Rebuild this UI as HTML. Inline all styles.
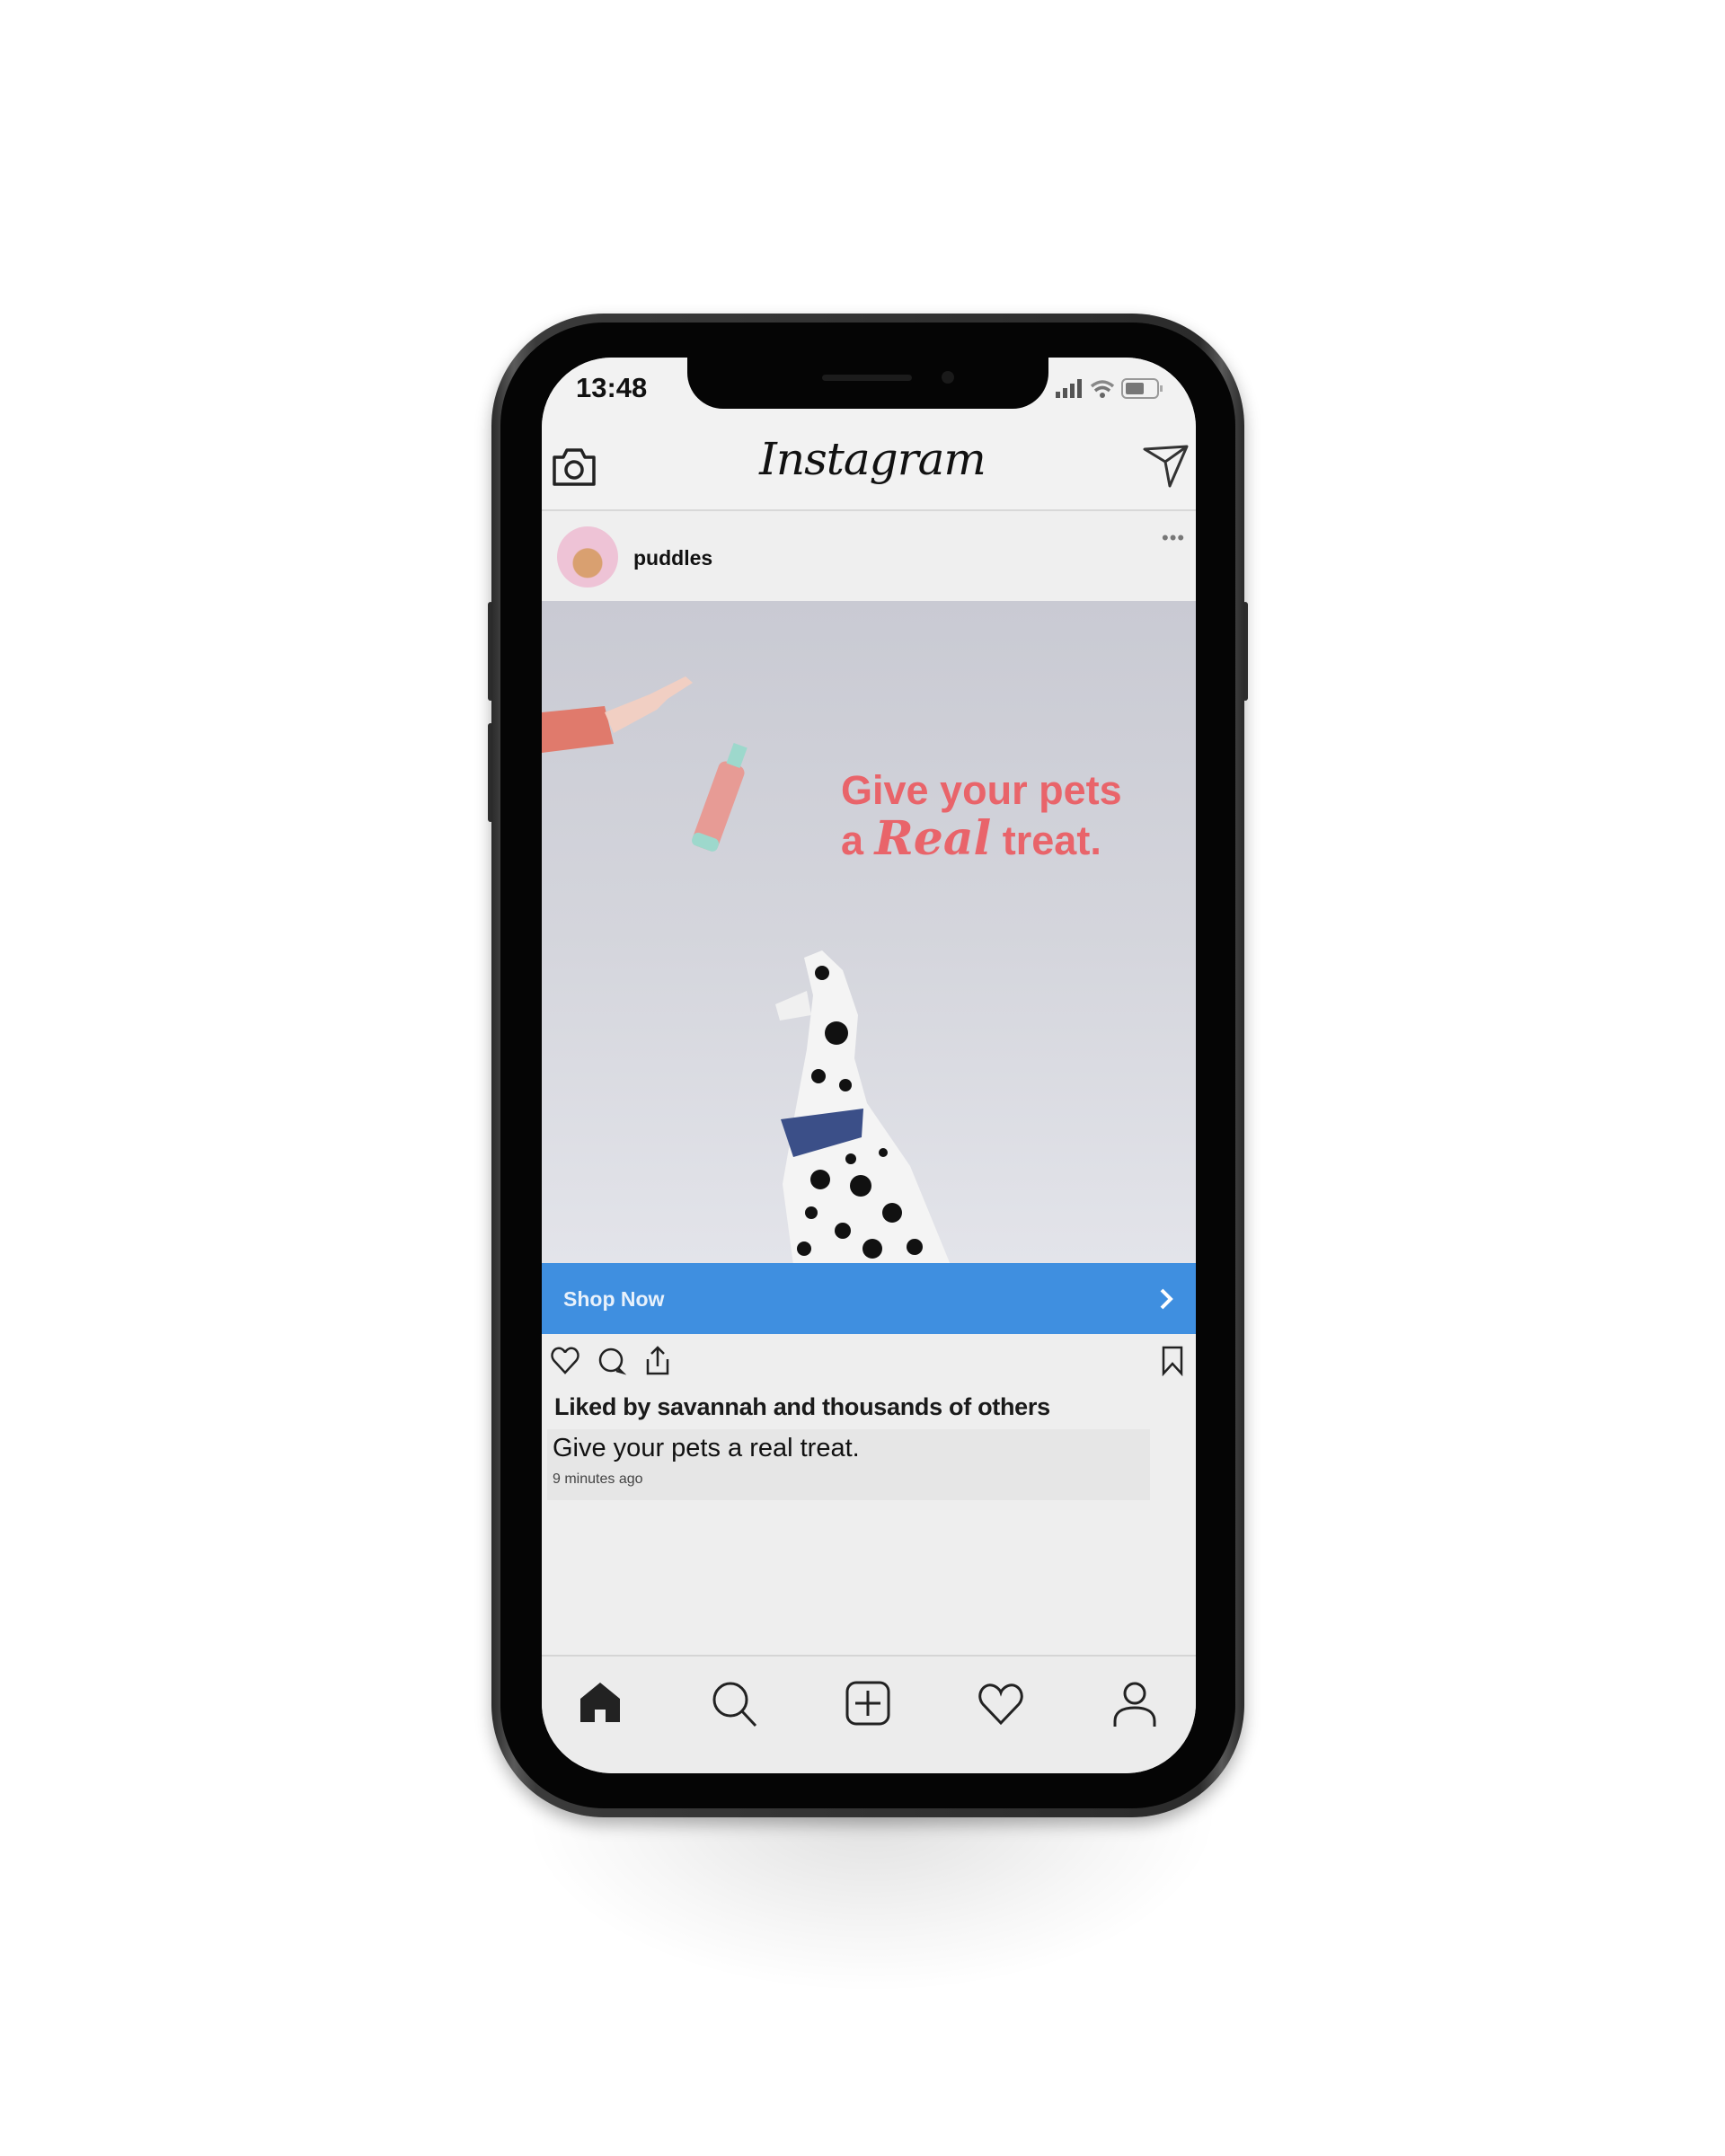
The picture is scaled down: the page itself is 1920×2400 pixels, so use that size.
<!DOCTYPE html>
<html><head><meta charset="utf-8"><style>
*{margin:0;padding:0;box-sizing:border-box}
body{width:1920px;height:2400px;background:#fff;position:relative;overflow:hidden;font-family:"Liberation Sans",sans-serif}
.abs{position:absolute}
.shadow{left:580px;top:1980px;width:780px;height:240px;background:radial-gradient(ellipse at 50% 15%,rgba(0,0,0,.12),rgba(0,0,0,.03) 50%,rgba(0,0,0,0) 70%)}
.phone{left:547px;top:349px;width:838px;height:1674px;border-radius:125px;background:linear-gradient(90deg,#2a2a2a,#5a5a5a 3%,#3a3a3a 6%,#2b2b2b 94%,#585858 97%,#2a2a2a);box-shadow:0 8px 18px rgba(0,0,0,.3)}
.bezel{left:557px;top:359px;width:818px;height:1654px;border-radius:115px;background:#050505}
.screen{left:603px;top:398px;width:728px;height:1576px;border-radius:78px;background:#eeeeee;overflow:hidden}
.btn{background:#333;border-radius:3px}
</style></head><body>
<div class="abs shadow"></div>
<div class="abs btn" style="left:543px;top:670px;width:6px;height:110px"></div>
<div class="abs btn" style="left:543px;top:805px;width:6px;height:110px"></div>
<div class="abs btn" style="left:1383px;top:670px;width:6px;height:110px"></div>
<div class="abs phone"></div>
<div class="abs bezel"></div>
<div class="abs screen">
  <div class="abs" style="left:0;top:0;width:728px;height:170px;background:#f2f2f2"></div>
  <div class="abs" style="left:0;top:169px;width:728px;height:2px;background:#d8d8d8"></div>
  <div class="abs" style="left:0;top:171px;width:728px;height:100px;background:#efefef"></div>
  <div class="abs" style="left:38px;top:16px;font-size:31px;font-weight:bold;color:#111">13:48</div>
  <svg class="abs" style="left:568px;top:20px" width="150" height="30" viewBox="0 0 150 30">
    <rect x="4" y="18" width="5" height="7" fill="#555"/><rect x="12" y="14" width="5" height="11" fill="#555"/><rect x="20" y="9" width="5" height="16" fill="#555"/><rect x="28" y="4" width="5" height="21" fill="#555"/>
    <path d="M44 12 Q56 2 68 12" stroke="#888" stroke-width="3.5" fill="none"/><path d="M48 17 Q56 10 64 17" stroke="#777" stroke-width="3.5" fill="none"/><circle cx="56" cy="22" r="3" fill="#666"/>
    <rect x="78" y="4" width="40" height="21" rx="5" stroke="#999" stroke-width="2" fill="none"/><rect x="82" y="8" width="20" height="13" rx="2" fill="#777"/><rect x="120" y="11" width="3" height="7" fill="#aaa"/>
  </svg>
  <svg class="abs" style="left:10px;top:97px" width="52" height="48" viewBox="0 0 52 48"><path d="M4 14 h10 l4 -8 h16 l4 8 h10 v30 h-44z" stroke="#222" stroke-width="3.5" fill="none" stroke-linejoin="round"/><circle cx="26" cy="28" r="9" stroke="#222" stroke-width="3.5" fill="none"/></svg>
  <div class="abs" style="left:0;top:84px;width:736px;text-align:center;font-family:'DejaVu Serif',serif;font-style:italic;font-size:50px;color:#111;letter-spacing:-1px">Instagram</div>
  <svg class="abs" style="left:668px;top:96px" width="54" height="50" viewBox="0 0 54 50"><path d="M3 6 L50 3 L31 47 L26 20 Z M26 20 L50 3" stroke="#333" stroke-width="3" fill="none" stroke-linejoin="round"/></svg>
  <div class="abs" style="left:17px;top:188px;width:68px;height:68px;border-radius:50%;background:radial-gradient(circle at 50% 60%,#d9a070 0 30%,#eec3d6 32%)"></div>
  <div class="abs" style="left:102px;top:210px;font-size:23px;font-weight:bold;color:#111">puddles</div>
  <div class="abs" style="left:690px;top:188px;font-size:22px;color:#777;letter-spacing:1px">•••</div>
  <div class="abs" style="left:0;top:271px;width:728px;height:737px;background:linear-gradient(180deg,#c9cad3 0%,#d4d5dc 50%,#e3e4ea 100%)"></div>
  <svg class="abs" style="left:0;top:340px" width="180" height="120" viewBox="0 0 180 120"><path d="M0 55 L70 48 L80 90 L0 100Z" fill="#e07a6c"/><path d="M70 55 L120 35 L160 15 L168 22 L140 40 L128 52 L80 78Z" fill="#f1cfc3"/></svg>
  <svg class="abs" style="left:160px;top:420px" width="80" height="140" viewBox="0 0 80 140"><g transform="rotate(20 40 70)"><rect x="25" y="30" width="30" height="100" rx="8" fill="#e79b95"/><rect x="25" y="115" width="30" height="15" rx="6" fill="#9dd8cc"/><rect x="32" y="8" width="16" height="24" fill="#9dd8cc"/></g></svg>
  <div class="abs" style="left:333px;top:455px;font-size:45px;font-weight:bold;color:#e9646a;line-height:54px">Give your pets<br>a <span style="font-family:'DejaVu Serif',serif;font-style:italic;font-size:52px">Real</span> treat.</div>
  <svg class="abs" style="left:240px;top:660px" width="250" height="350" viewBox="0 0 250 350">
    <path d="M62 50 L52 8 L72 0 L95 22 L112 72 L108 120 L122 170 L170 240 L215 350 L40 350 L28 260 L42 180 L55 110 Z" fill="#f4f4f4"/>
    <path d="M20 60 L55 45 L60 72 L25 78Z" fill="#f0f0f0"/>
    <path d="M26 188 L118 176 L116 208 L40 230Z" fill="#3b4f88"/>
    <g fill="#111"><circle cx="72" cy="25" r="8"/><circle cx="88" cy="92" r="13"/><circle cx="68" cy="140" r="8"/><circle cx="98" cy="150" r="7"/><circle cx="70" cy="255" r="11"/><circle cx="115" cy="262" r="12"/><circle cx="150" cy="292" r="11"/><circle cx="95" cy="312" r="9"/><circle cx="60" cy="292" r="7"/><circle cx="175" cy="330" r="9"/><circle cx="128" cy="332" r="11"/><circle cx="104" cy="232" r="6"/><circle cx="52" cy="332" r="8"/><circle cx="140" cy="225" r="5"/></g>
  </svg>
  <div class="abs" style="left:0;top:1008px;width:728px;height:79px;background:#3f8fe0"></div>
  <div class="abs" style="left:24px;top:1035px;font-size:23px;color:#e8f1fb;font-weight:bold">Shop Now</div>
  <svg class="abs" style="left:685px;top:1034px" width="20" height="28" viewBox="0 0 20 28"><path d="M5 4 L15 14 L5 24" stroke="#fff" stroke-width="4" fill="none"/></svg>
  <svg class="abs" style="left:10px;top:1099px" width="140" height="36" viewBox="0 0 140 36">
    <path d="M16 31 L4 18 C-2 11 4 2 11 4 C14 5 16 8 16 9 C16 8 18 5 21 4 C28 2 34 11 28 18Z" stroke="#222" stroke-width="2.5" fill="none"/>
    <circle cx="67" cy="17" r="12" stroke="#222" stroke-width="2.5" fill="none"/><path d="M75 26 L80 31 L73 29" stroke="#222" stroke-width="2.5" fill="none"/>
    <path d="M108 16 V32 H130 V16 M119 24 V3 M112 10 L119 3 L126 10" stroke="#222" stroke-width="2.5" fill="none"/>
  </svg>
  <svg class="abs" style="left:689px;top:1100px" width="26" height="34" viewBox="0 0 26 34"><path d="M3 2 H23 V31 L13 20 L3 31Z" stroke="#222" stroke-width="2.5" fill="none"/></svg>
  <div class="abs" style="left:14px;top:1153px;font-size:27px;color:#1a1a1a;font-weight:bold;letter-spacing:-0.3px">Liked by savannah and thousands of others</div>
  <div class="abs" style="left:6px;top:1193px;width:671px;height:79px;background:#e6e6e6"></div>
  <div class="abs" style="left:12px;top:1198px;font-size:29px;color:#111">Give your pets a real treat.</div>
  <div class="abs" style="left:12px;top:1240px;font-size:16px;color:#444">9 minutes ago</div>
  <div class="abs" style="left:0;top:1444px;width:728px;height:2px;background:#d5d5d5"></div>
  <div class="abs" style="left:0;top:1446px;width:728px;height:130px;background:#ececec"></div>
  <svg class="abs" style="left:40px;top:1473px" width="50" height="50" viewBox="0 0 50 50"><path d="M3 46 V20 L25 2 L47 20 V46 H31 V32 H19 V46Z" fill="#222"/></svg>
  <svg class="abs" style="left:188px;top:1472px" width="54" height="54" viewBox="0 0 54 54"><circle cx="22" cy="22" r="18" stroke="#222" stroke-width="3" fill="none"/><path d="M35 35 L50 51" stroke="#222" stroke-width="3"/></svg>
  <svg class="abs" style="left:337px;top:1472px" width="52" height="52" viewBox="0 0 52 52"><rect x="3" y="3" width="46" height="46" rx="10" stroke="#222" stroke-width="3" fill="none"/><path d="M26 12 V40 M12 26 H40" stroke="#222" stroke-width="3"/></svg>
  <svg class="abs" style="left:485px;top:1474px" width="52" height="50" viewBox="0 0 52 50"><path d="M26 46 L6 25 C-2 15 6 2 16 4 C21 5 25 9 26 12 C27 9 31 5 36 4 C46 2 54 15 46 25Z" stroke="#222" stroke-width="3" fill="none"/></svg>
  <svg class="abs" style="left:634px;top:1472px" width="52" height="54" viewBox="0 0 52 54"><circle cx="26" cy="15" r="11" stroke="#222" stroke-width="3" fill="none"/><path d="M4 52 V46 C4 36 12 31 26 31 C40 31 48 36 48 46 V52" stroke="#222" stroke-width="3" fill="none"/></svg>
</div>
<div class="abs" style="left:765px;top:390px;width:402px;height:65px;background:#050505;border-radius:0 0 40px 40px"></div>
<div class="abs" style="left:915px;top:417px;width:100px;height:7px;border-radius:4px;background:#1c1c1c"></div>
<div class="abs" style="left:1048px;top:413px;width:14px;height:14px;border-radius:50%;background:#1a1a1a"></div>
</body></html>
